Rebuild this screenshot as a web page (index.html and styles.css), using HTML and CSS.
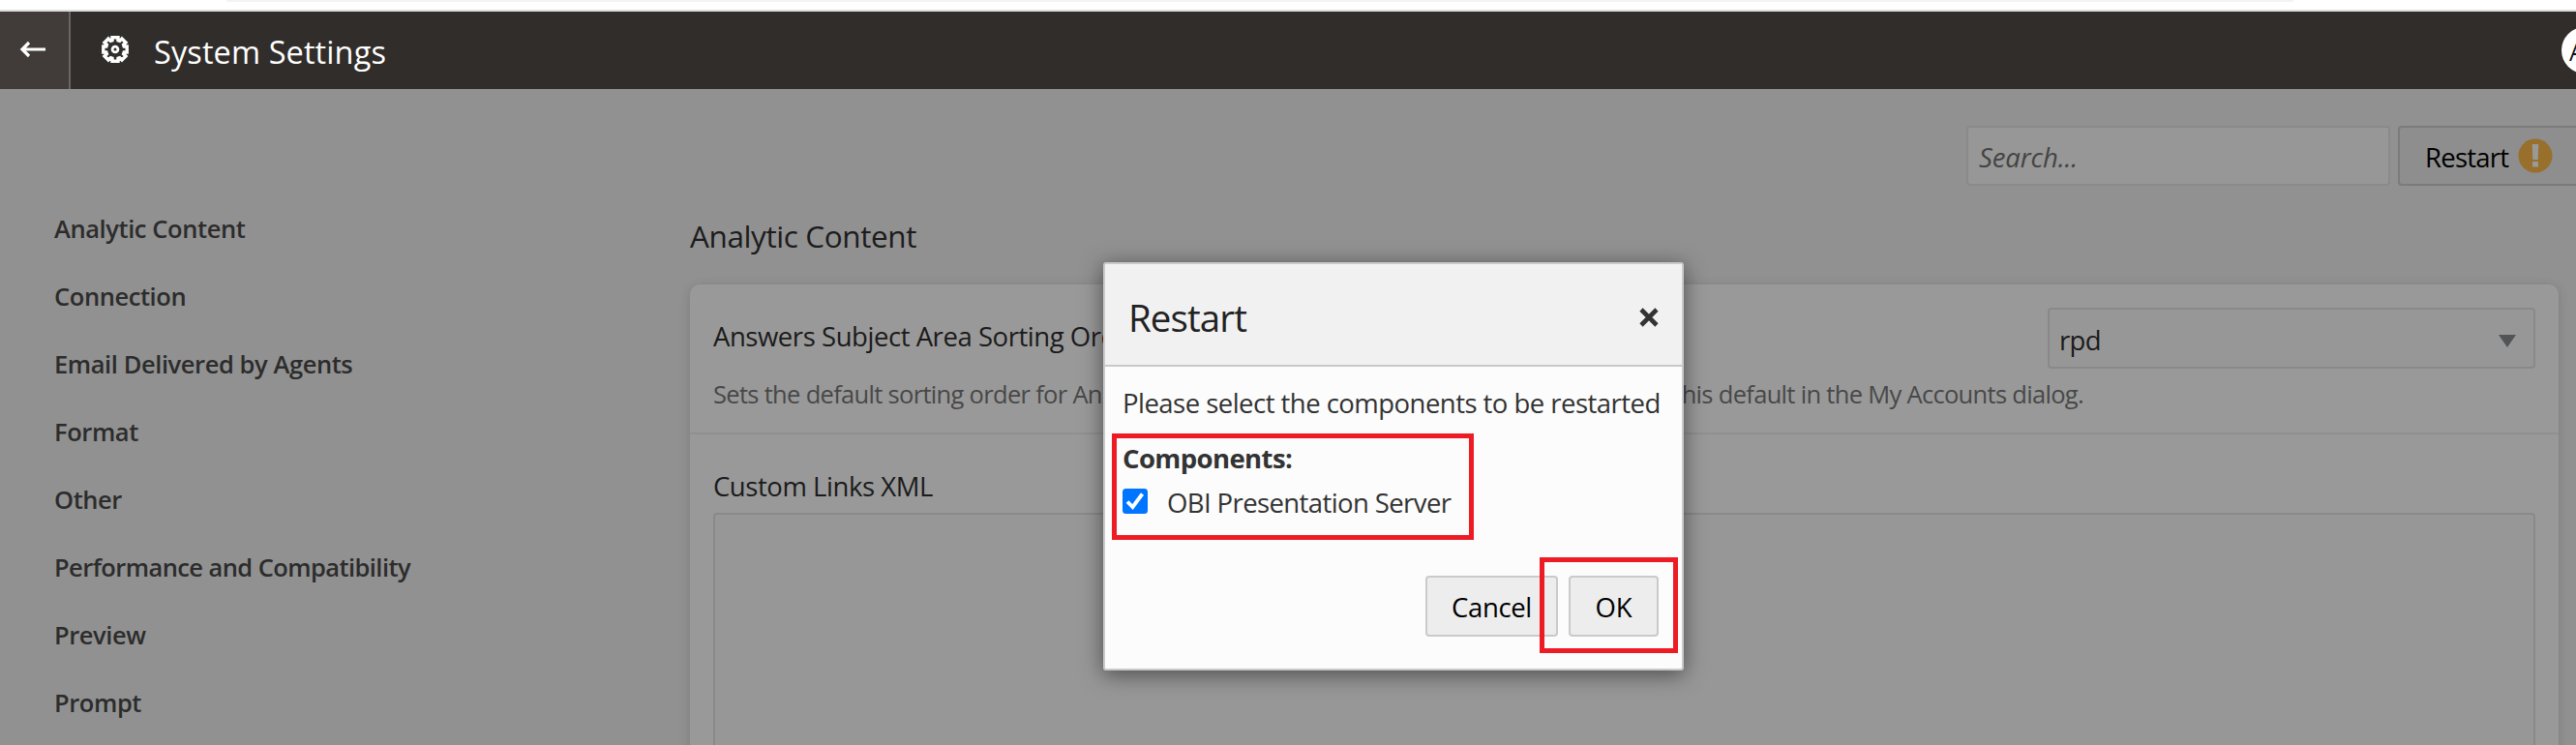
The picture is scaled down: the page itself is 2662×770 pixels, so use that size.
FILE: index.html
```html
<!DOCTYPE html>
<html lang="en">
<head>
<meta charset="utf-8">
<title>System Settings</title>
<link rel="stylesheet" href="styles.css">
</head>
<body>
<div class="browser-strip"><div class="address-bar"></div></div>
<header class="header">
  <div class="back">
    <svg width="28" height="18" viewBox="0 0 28 18"><path d="M27 9H3M10 2L3 9l7 7" fill="none" stroke="#fff" stroke-width="3.200"/></svg>
  </div>
  <svg class="gear" width="28" height="28" viewBox="-14 -14 28 28">
    <path fill="none" stroke="#fff" stroke-width="3.400" d="M-3 -9.2V-12.2H3V-9.2L4.7 -8.6L7 -11L11 -7L8.6 -4.7L9.2 -3H12.2V3H9.2L8.6 4.7L11 7L7 11L4.7 8.6L3 9.2V12.2H-3V9.2L-4.7 8.6L-7 11L-11 7L-8.6 4.7L-9.2 3H-12.2V-3H-9.2L-8.6 -4.7L-11 -7L-7 -11L-4.7 -8.6Z"/>
    <circle r="2.900" fill="none" stroke="#fff" stroke-width="2.800"/>
  </svg>
  <h1 class="title">System Settings</h1>
  <div class="avatar">A</div>
</header>
<main class="main">
  <nav class="sidebar">
    <a class="nav-item">Analytic Content</a>
    <a class="nav-item">Connection</a>
    <a class="nav-item">Email Delivered by Agents</a>
    <a class="nav-item">Format</a>
    <a class="nav-item">Other</a>
    <a class="nav-item nav-long">Performance and Compatibility</a>
    <a class="nav-item">Preview</a>
    <a class="nav-item">Prompt</a>
  </nav>
  <section class="content">
    <div class="toolbar">
      <div class="search">Search...</div>
      <div class="restart">
        <span>Restart</span>
        <svg class="warn" width="36" height="36" viewBox="0 0 36 36"><circle cx="18" cy="18" r="17.5" fill="#986f2b"/><path d="M14.7 6h6.6l-.6 16h-5.4zM15 24h6v5.500h-6z" fill="#999"/></svg>
      </div>
    </div>
    <h2 class="heading">Analytic Content</h2>
    <div class="card">
      <div class="setting">
        <div class="setting-top">
          <div class="label">Answers Subject Area Sorting Order</div>
          <div class="select"><span>rpd</span><svg width="18" height="13" viewBox="0 0 18 13"><path d="M0 0h18L9 13z" fill="#525456"/></svg></div>
        </div>
        <p class="desc"><span>Sets the default sorting order for Answers subject areas. Users can override</span><span>this default in the My Accounts dialog.</span></p>
      </div>
      <div class="setting setting-xml">
        <div class="label">Custom Links XML</div>
        <div class="textarea"></div>
      </div>
    </div>
  </section>
</main>
<div class="dialog">
  <div class="dialog-head">
    <span class="dialog-title">Restart</span>
    <svg class="close" width="20" height="20" viewBox="0 0 20 20"><path d="M2 2l16 16M18 2L2 18" stroke="#333" stroke-width="4.600"/></svg>
  </div>
  <div class="dialog-body">
    <p class="message">Please select the components to be restarted</p>
    <p class="components">Components:</p>
    <div class="option">
      <svg class="check" width="26" height="26" viewBox="0 0 26 26"><rect width="26" height="26" rx="3.500" fill="#0075ff"/><path d="M5 13.500l5.500 5.500L20.500 5.500" fill="none" stroke="#fff" stroke-width="3.800"/></svg>
      <span>OBI Presentation Server</span>
    </div>
    <div class="buttons">
      <div class="button cancel">Cancel</div>
      <div class="button ok">OK</div>
    </div>
  </div>
</div>
<div class="mark mark-components"></div>
<div class="mark mark-ok"></div>
</body>
</html>
```
FILE: styles.css
```css
* { box-sizing: border-box; }
body {
  margin: 0;
  width: 2662px;
  height: 770px;
  overflow: hidden;
  position: relative;
  font: 27.5px/40px "Open Sans", "Noto Sans", sans-serif;
  background: #919191;
}
h1, h2, p { margin: 0; font-weight: 400; }
svg { display: block; flex: none; }

.browser-strip { height: 12px; background: #fff; border-bottom: 2px solid #dcdcdc; }
.address-bar { height: 2px; margin: 0 292px 0 234px; background: #f1f3f4; border-radius: 0 0 8px 8px; }

.header { height: 80px; background: #312d2a; display: flex; align-items: center; }
.back {
  width: 73px;
  height: 80px;
  background: #413c39;
  border-right: 2px solid #6a6562;
  padding: 30px 0 0 20px;
}
.gear { margin: -2px 0 0 32px; }
.title { margin: 3px 0 0 26px; color: #fff; font-size: 32.5px; letter-spacing: .1px; }
.avatar {
  margin: -1px -33px 0 auto;
  width: 48px;
  height: 48px;
  border-radius: 50%;
  background: #fff;
  color: #111;
  font-size: 25px;
  line-height: 50px;
  padding-left: 8px;
}

.main { display: flex; height: 678px; overflow: hidden; }
.sidebar { width: 713px; padding: 109px 0 0 56px; flex: none; }
.nav-item {
  display: block;
  height: 70px;
  line-height: 70px;
  font-size: 25.5px;
  font-weight: 600;
  letter-spacing: -.42px;
  color: #2c2c2c;
}
.nav-long { letter-spacing: -.58px; }

.content { width: 1931px; flex: none; padding-top: 38px; }
.toolbar { display: flex; gap: 8px; margin-left: 1319px; width: 700px; }
.search {
  width: 438px;
  height: 62px;
  flex: none;
  border: 2px solid #8a8a8a;
  border-radius: 4px;
  background: #979797;
  color: #444;
  font-style: italic;
  line-height: 61px;
  padding-left: 11px;
  letter-spacing: -.1px;
}
.restart {
  width: 204px;
  height: 62px;
  flex: none;
  border: 2px solid #7b7b7b;
  border-radius: 4px;
  background: #8e8e8e;
  display: flex;
  padding-left: 26px;
  line-height: 61px;
  color: #000;
  letter-spacing: -.75px;
}
.warn { margin: 11px 0 0 10px; }
.heading {
  margin: 32px 0 30px;
  font-size: 31.5px;
  letter-spacing: -.4px;
  color: #1c1c1c;
}
.card {
  height: 500px;
  background: #999;
  border-radius: 10px;
  box-shadow: 0 2px 12px rgba(0, 0, 0, .14);
}
.setting { height: 155px; border-bottom: 2px solid #8f8f8f; padding: 24px 24px 0; }
.setting-top { display: flex; justify-content: space-between; }
.setting-top .label { margin-top: 10px; }
.label { color: #1b1b1b; letter-spacing: -.45px; }
.select {
  width: 504px;
  height: 63px;
  border: 2px solid #898989;
  border-radius: 4px;
  background: #979797;
  display: flex;
  justify-content: space-between;
  align-items: center;
  padding: 5px 18px 0 10px;
  color: #1b1b1b;
  letter-spacing: -.65px;
}
.desc {
  margin-top: 6px;
  width: 1416px;
  display: flex;
  justify-content: space-between;
  white-space: nowrap;
  font-size: 25.5px;
  letter-spacing: -.69px;
  color: #484848;
}
.setting-xml { height: 345px; border-bottom: 0; padding-top: 34px; }
.textarea {
  margin-top: 7px;
  height: 300px;
  border: 2px solid #898989;
  border-radius: 4px;
  background: #979797;
}

.dialog {
  position: absolute;
  left: 1140px;
  top: 271px;
  width: 600px;
  height: 422px;
  background: #fcfcfc;
  border: 2px solid #c9c9c9;
  border-radius: 3px;
  box-shadow: 0 4px 22px rgba(0, 0, 0, .5);
  color: #333;
}
.dialog-head {
  height: 106px;
  background: #f1f1f1;
  border-bottom: 2px solid #c9c9c9;
  display: flex;
  justify-content: space-between;
  align-items: center;
  padding: 5px 24px 0 24px;
}
.dialog-title { font-size: 38.5px; letter-spacing: -.9px; color: #222; }
.dialog-body { padding: 18px 24px 0 18px; }
.message { letter-spacing: -.53px; white-space: nowrap; }
.components { margin-top: 17px; font-weight: 700; letter-spacing: -.6px; }
.option { margin-top: 6px; height: 40px; display: flex; letter-spacing: -.6px; }
.check { margin: 5px 20px 0 0; }
.buttons { margin-top: 55px; display: flex; justify-content: flex-end; gap: 11px; }
.button {
  height: 63px;
  border: 2px solid #cacaca;
  border-radius: 4px;
  background: #ededed;
  color: #000;
  line-height: 61px;
  text-align: center;
}
.cancel { width: 137px; letter-spacing: -.35px; }
.ok { width: 93px; }

.mark { position: absolute; border: 5px solid #ed1c24; }
.mark-components { left: 1149px; top: 448px; width: 374px; height: 110px; }
.mark-ok { left: 1591px; top: 576px; width: 143px; height: 99px; }
```
